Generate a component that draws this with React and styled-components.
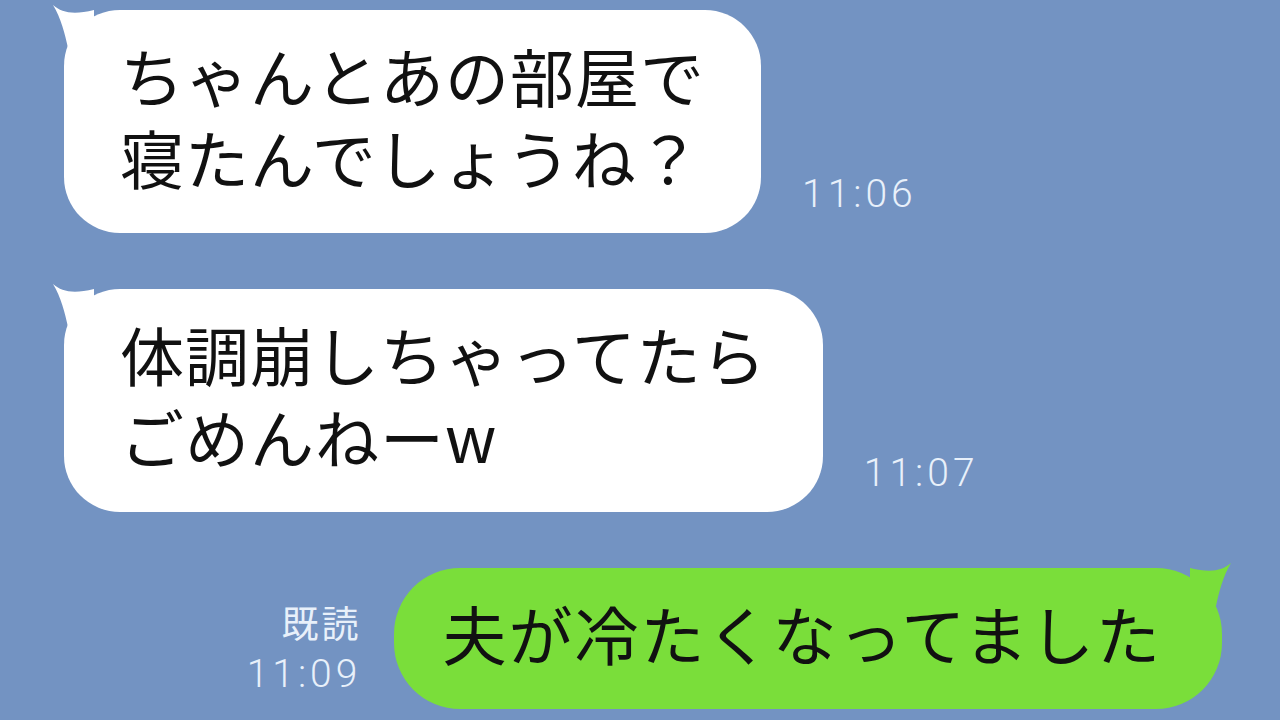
import React from "react";
import styled, { createGlobalStyle } from "styled-components";

const GlobalStyle = createGlobalStyle`
  html, body {
    margin: 0;
    padding: 0;
  }
  body {
    background: #7393c2;
  }
`;

const Screen = styled.main`
  width: 1280px;
  height: 720px;
  overflow: hidden;
  background: #7393c2;
  box-sizing: border-box;
  padding: 10px 58px 0 64px;
  display: flex;
  flex-direction: column;
  gap: 56px;
`;

const Row = styled.div`
  display: flex;
  align-items: flex-end;
  justify-content: ${props => (props.mine ? "flex-end" : "flex-start")};
  gap: ${props => (props.mine ? "33px" : "41px")};
`;

const Bubble = styled.div`
  position: relative;
  background: ${props => (props.mine ? "#7ade3a" : "#ffffff")};
  border-radius: ${props => (props.mine ? "66px" : "56px")};
  padding: ${props => (props.mine ? "23px 60px 36px 48px" : "23px 56px 36px")};
  font-family: "Noto Sans CJK JP", "Noto Sans", sans-serif;
  font-size: 64px;
  line-height: 82px;
  letter-spacing: ${props => (props.mine ? "2px" : "1px")};
  color: #111;
  white-space: nowrap;
`;

const Tail = styled.svg`
  position: absolute;
  top: -6px;
  ${props => (props.mine ? "right: -10px;" : "left: -12px;")}
  width: 50px;
  height: 50px;
  transform: ${props => (props.mine ? "scaleX(-1)" : "none")};
`;

const Meta = styled.div`
  display: flex;
  flex-direction: column;
  align-items: flex-end;
  margin-bottom: ${props => (props.mine ? "14px" : "18px")};
  color: #e8f0fa;
`;

const ReadMark = styled.span`
  font-family: "Noto Sans CJK JP", sans-serif;
  font-size: 37px;
  line-height: 62px;
  letter-spacing: 3px;
`;

const Time = styled.span`
  font-family: "Roboto", "Liberation Sans", sans-serif;
  font-weight: 300;
  font-size: 39px;
  line-height: 42px;
  letter-spacing: 4px;
`;

const BubbleTail = ({ mine }) => (
  <Tail mine={mine} viewBox="0 0 50 50">
    <path
      d="M1 1 C 10 9 22 11 42 6 L 42 44 L 16 44 C 13 30 9 14 1 1 Z"
      fill={mine ? "#7ade3a" : "#ffffff"}
    />
  </Tail>
);

const Message = ({ lines, time, mine, read }) => (
  <Row mine={mine}>
    {mine && (
      <Meta mine>
        {read && <ReadMark>既読</ReadMark>}
        <Time>{time}</Time>
      </Meta>
    )}
    <Bubble mine={mine}>
      <BubbleTail mine={mine} />
      {lines.map(line => (
        <div key={line}>{line}</div>
      ))}
    </Bubble>
    {!mine && (
      <Meta>
        <Time>{time}</Time>
      </Meta>
    )}
  </Row>
);

const messages = [
  { lines: ["ちゃんとあの部屋で", "寝たんでしょうね？"], time: "11:06" },
  { lines: ["体調崩しちゃってたら", "ごめんねーw"], time: "11:07" },
  { lines: ["夫が冷たくなってました"], time: "11:09", mine: true, read: true }
];

const App = () => (
  <>
    <GlobalStyle />
    <Screen>
      {messages.map(msg => (
        <Message key={msg.time} {...msg} />
      ))}
    </Screen>
  </>
);

export default App;
